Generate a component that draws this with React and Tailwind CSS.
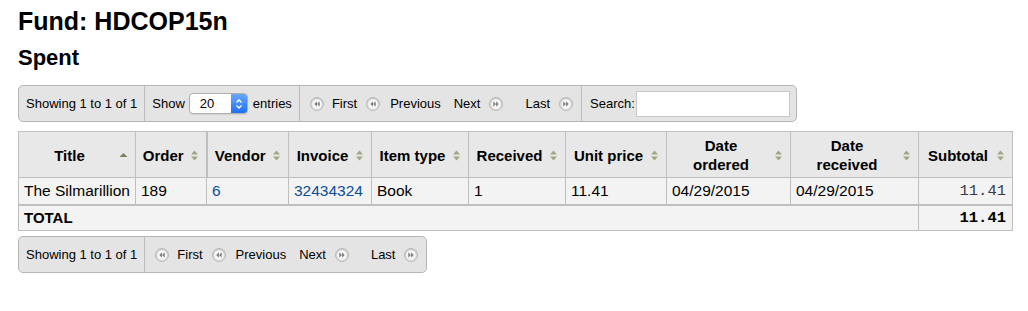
import { Fragment } from 'react';

const font = { fontFamily: '"Liberation Sans", Arial, Helvetica, sans-serif' };
const mono = { fontFamily: '"Liberation Mono", "Courier New", monospace' };

const columns = [
  { key: 'title', label: 'Title', width: 117, sort: 'asc' },
  { key: 'order', label: 'Order', width: 71, thick: true },
  { key: 'vendor', label: 'Vendor', width: 82 },
  { key: 'invoice', label: 'Invoice', width: 83 },
  { key: 'type', label: 'Item type', width: 97 },
  { key: 'received', label: 'Received', width: 97 },
  { key: 'price', label: 'Unit price', width: 101 },
  { key: 'ordered', label: ['Date', 'ordered'], width: 124 },
  { key: 'dateReceived', label: ['Date', 'received'], width: 128 },
  { key: 'subtotal', label: 'Subtotal', width: 94 },
];

const rows = [
  {
    title: 'The Silmarillion',
    order: '189',
    vendor: '6',
    invoice: '32434324',
    type: 'Book',
    received: '1',
    price: '11.41',
    ordered: '04/29/2015',
    dateReceived: '04/29/2015',
    subtotal: '11.41',
  },
];

// round grey pager button glyph (first/previous point left, next/last point right)
function PagerIcon({ dir = 'left', className = '' }) {
  const tris =
    dir === 'left'
      ? ['6.9,4.3 4.3,7 6.9,9.7', '9.7,4.3 7.1,7 9.7,9.7']
      : ['4.3,4.3 6.9,7 4.3,9.7', '7.1,4.3 9.7,7 7.1,9.7'];
  const id = `pg-${dir}`;
  return (
    <svg width="14" height="14" viewBox="0 0 14 14" className={`shrink-0 ${className}`}>
      <defs>
        <linearGradient id={id} x1="0" y1="0" x2="0" y2="1">
          <stop offset="0" stopColor="#c9c9c9" />
          <stop offset="1" stopColor="#e2e2e2" />
        </linearGradient>
      </defs>
      <circle cx="7" cy="7" r="6.5" fill={`url(#${id})`} stroke="#b9b9b9" />
      <circle cx="7" cy="7" r="4.8" fill="#f7f7f7" />
      {tris.map((p) => (
        <polygon key={p} points={p} fill="#7d7d7d" />
      ))}
    </svg>
  );
}

function SortIcon({ dir }) {
  if (dir === 'asc') {
    return (
      <svg width="9" height="11" viewBox="0 0 9 11" className="shrink-0">
        <polygon points="4.5,3 8.5,7 0.5,7" fill="#7e8359" />
      </svg>
    );
  }
  return (
    <svg width="9" height="11" viewBox="0 0 9 11" className="shrink-0">
      <polygon points="4.5,0.5 8,4.5 1,4.5" fill="#a2a781" />
      <polygon points="1,6.5 8,6.5 4.5,10.5" fill="#a2a781" />
    </svg>
  );
}

function Pager() {
  return (
    <div className="flex h-full items-center border-l border-[#bcbcbc] pl-[10px] pr-[8px]">
      <PagerIcon />
      <span className="ml-[8px]">First</span>
      <PagerIcon className="ml-[9px]" />
      <span className="ml-[10px]">Previous</span>
      <span className="ml-[13px]">Next</span>
      <PagerIcon dir="right" className="ml-[9px]" />
      <span className="ml-[22px]">Last</span>
      <PagerIcon dir="right" className="ml-[9px]" />
    </div>
  );
}

function Toolbar({ children }) {
  return (
    <div className="flex h-[37px] w-fit items-center rounded-[5px] border border-[#b5b5b5] bg-[#e4e4e4] text-[13px] text-black">
      {children}
    </div>
  );
}

function LengthSelect() {
  return (
    <div className="ml-[4px] flex h-[21px] w-[59px] overflow-hidden rounded-[4px] border border-[#b0b0b0] bg-white shadow-[0_1px_1px_rgba(0,0,0,0.08)]">
      <span className="flex-1 pl-[10px] leading-[19px]">20</span>
      <span className="flex w-[16px] items-center justify-center bg-gradient-to-b from-[#68a7fa] to-[#1c6ff4]">
        <svg width="8" height="12" viewBox="0 0 8 12">
          <polyline points="1.5,4.5 4,2 6.5,4.5" fill="none" stroke="white" strokeWidth="1.4" />
          <polyline points="1.5,7.5 4,10 6.5,7.5" fill="none" stroke="white" strokeWidth="1.4" />
        </svg>
      </span>
    </div>
  );
}

export default function App() {
  return (
    <div className="min-h-[311px] bg-white px-[18px] text-black" style={font}>
      <h1 className="pt-[7px] text-[25px] font-bold leading-[28px]">Fund: HDCOP15n</h1>
      <h2 className="mt-[10px] text-[22px] font-bold leading-[26px]">Spent</h2>

      {/* top toolbar: info, page length, pager, search */}
      <div className="mt-[14px]">
        <Toolbar>
          <div className="px-[7px]">Showing 1 to 1 of 1</div>
          <div className="flex h-full items-center border-l border-[#bcbcbc] pl-[7px] pr-[7px]">
            <span>Show</span>
            <LengthSelect />
            <span className="ml-[5px]">entries</span>
          </div>
          <Pager />
          <div className="flex h-full items-center border-l border-[#bcbcbc] pl-[8px] pr-[6px]">
            <span>Search:</span>
            <input
              type="text"
              className="ml-[1px] h-[26px] w-[154px] border border-[#c8c8c8] bg-white outline-none"
            />
          </div>
        </Toolbar>
      </div>

      <table className="mt-[9px] w-[994px] table-fixed border-collapse border border-[#bfbfbf] text-[15.5px]">
        <colgroup>
          {columns.map((c) => (
            <col key={c.key} style={{ width: c.width }} />
          ))}
        </colgroup>
        <thead>
          <tr className="bg-[#e8e8e8] text-[15px]">
            {columns.map((c) => (
              <th
                key={c.key}
                className={`border border-[#bfbfbf] pb-[3px] pl-[4px] pr-[7px] pt-[4px] font-bold leading-[19px] ${
                  c.thick ? 'border-r-2' : ''
                }`}
              >
                <div className="flex items-center gap-[3px]">
                  <span className="flex-1 text-center">
                    {Array.isArray(c.label)
                      ? c.label.map((l, i) => (
                          <Fragment key={l}>
                            {i > 0 && <br />}
                            {l}
                          </Fragment>
                        ))
                      : c.label}
                  </span>
                  <SortIcon dir={c.sort} />
                </div>
              </th>
            ))}
          </tr>
        </thead>
        <tbody>
          {rows.map((r) => (
            <tr key={r.order} className="bg-[#f3f3f3] leading-[18px]">
              <td className="border border-[#bfbfbf] px-[5px] py-[4px] whitespace-nowrap">{r.title}</td>
              <td className="border border-[#bfbfbf] px-[5px] py-[4px]">{r.order}</td>
              <td className="border border-[#bfbfbf] px-[5px] py-[4px]">
                <a href="#" className="text-[#0a4d9c]">{r.vendor}</a>
              </td>
              <td className="border border-[#bfbfbf] px-[5px] py-[4px]">
                <a href="#" className="text-[#0a4d9c]">{r.invoice}</a>
              </td>
              <td className="border border-[#bfbfbf] px-[5px] py-[4px]">{r.type}</td>
              <td className="border border-[#bfbfbf] px-[5px] py-[4px]">{r.received}</td>
              <td className="border border-[#bfbfbf] px-[5px] py-[4px]">{r.price}</td>
              <td className="border border-[#bfbfbf] px-[5px] py-[4px]">{r.ordered}</td>
              <td className="border border-[#bfbfbf] px-[5px] py-[4px]">{r.dateReceived}</td>
              <td className="border border-[#bfbfbf] py-[4px] pl-[5px] pr-[6px] text-right text-[#3a3a4a]" style={mono}>
                {r.subtotal}
              </td>
            </tr>
          ))}
        </tbody>
        <tfoot>
          <tr className="bg-[#f3f3f3] font-bold leading-[18px]">
            <td colSpan={9} className="border border-t-2 border-[#bfbfbf] px-[5px] py-[3px] text-[15px]">
              TOTAL
            </td>
            <td className="border border-t-2 border-[#bfbfbf] py-[3px] pl-[5px] pr-[6px] text-right" style={mono}>
              11.41
            </td>
          </tr>
        </tfoot>
      </table>

      {/* bottom toolbar: info and pager */}
      <div className="mt-[5px]">
        <Toolbar>
          <div className="px-[7px]">Showing 1 to 1 of 1</div>
          <Pager />
        </Toolbar>
      </div>
    </div>
  );
}
